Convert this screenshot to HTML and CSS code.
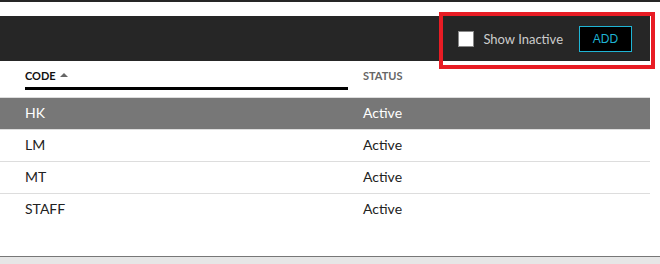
FILE: index.html
```html
<!DOCTYPE html>
<html lang="en">
<head>
  <meta charset="UTF-8">
  <meta name="viewport" content="width=device-width, initial-scale=1.0">
  <title>Codes</title>
  <link rel="stylesheet" href="styles.css">
</head>
<body>
  <div class="topbar"></div>
  <div class="page">
    <div class="toolbar">
      <label class="show-inactive">
        <span class="checkbox"></span>
        <span>Show Inactive</span>
      </label>
      <button class="add-btn">ADD</button>
    </div>
    <div class="grid">
      <div class="grid-head">
        <div class="head-cell sorted">CODE <span class="sort-arrow"></span></div>
        <div class="head-cell status">STATUS</div>
      </div>
      <div class="grid-row selected"><div class="cell">HK</div><div class="cell status">Active</div></div>
      <div class="grid-row"><div class="cell">LM</div><div class="cell status">Active</div></div>
      <div class="grid-row"><div class="cell">MT</div><div class="cell status">Active</div></div>
      <div class="grid-row"><div class="cell">STAFF</div><div class="cell status">Active</div></div>
    </div>
  </div>
  <div class="footer"></div>
  <!-- highlight annotation -->
  <div class="highlight"></div>
</body>
</html>
```

FILE: styles.css
```css
html, body {
  height: 100%;
}
body {
  margin: 0;
  font-family: Lato, "Open Sans", Arial, sans-serif;
  background: #fff;
  color: #222;
  display: flex;
  flex-direction: column;
  position: relative;
}
.topbar {
  height: 2px;
  background: #262626;
}
.page {
  width: 650px;
  padding-top: 14px;
}
.toolbar {
  height: 45px;
  background: #262626;
  display: flex;
  justify-content: flex-end;
  align-items: center;
  padding-right: 18px;
}
.show-inactive {
  display: flex;
  align-items: center;
  gap: 9px;
  color: #ccc;
  font-size: 13px;
  margin-right: 16px;
}
.checkbox {
  width: 14px;
  height: 14px;
  background: #fff;
  border: 1px solid #888;
}
.add-btn {
  width: 53px;
  height: 26px;
  background: #000;
  border: 1px solid #1fb4d4;
  color: #1fb4d4;
  font-family: "Liberation Sans", Arial, sans-serif;
  font-size: 12px;
  padding: 0;
}
.grid-head {
  display: grid;
  grid-template-columns: 348px 1fr;
  height: 36px;
}
.head-cell {
  font-size: 11px;
  font-weight: bold;
  line-height: 16px;
  padding-top: 7px;
}
.head-cell.sorted {
  margin-left: 25px;
  color: #111;
  height: 19px;
  border-bottom: 3px solid #000;
  display: flex;
  align-items: flex-start;
  gap: 4px;
}
.sort-arrow {
  width: 0;
  height: 0;
  border-left: 4px solid transparent;
  border-right: 4px solid transparent;
  border-bottom: 4px solid #666;
  margin-top: 5px;
}
.head-cell.status {
  color: #666;
  padding-left: 15px;
}
.grid-row {
  display: grid;
  grid-template-columns: 348px 1fr;
  height: 31px;
  border-top: 1px solid #ddd;
  font-size: 14px;
  line-height: 16px;
  align-items: center;
}
.grid-row .cell {
  padding-left: 25px;
  padding-bottom: 1px;
}
.grid-row .cell.status {
  padding-left: 15px;
}
.grid-row.selected {
  background: #777;
  color: #fff;
}
.footer {
  margin-top: auto;
  height: 7px;
  border-top: 1px solid #777;
  background: #e6e6e6;
}
.highlight {
  position: absolute;
  left: 439px;
  top: 12px;
  width: 216px;
  height: 57px;
  box-sizing: border-box;
  border: 4px solid #e81c24;
}
```
